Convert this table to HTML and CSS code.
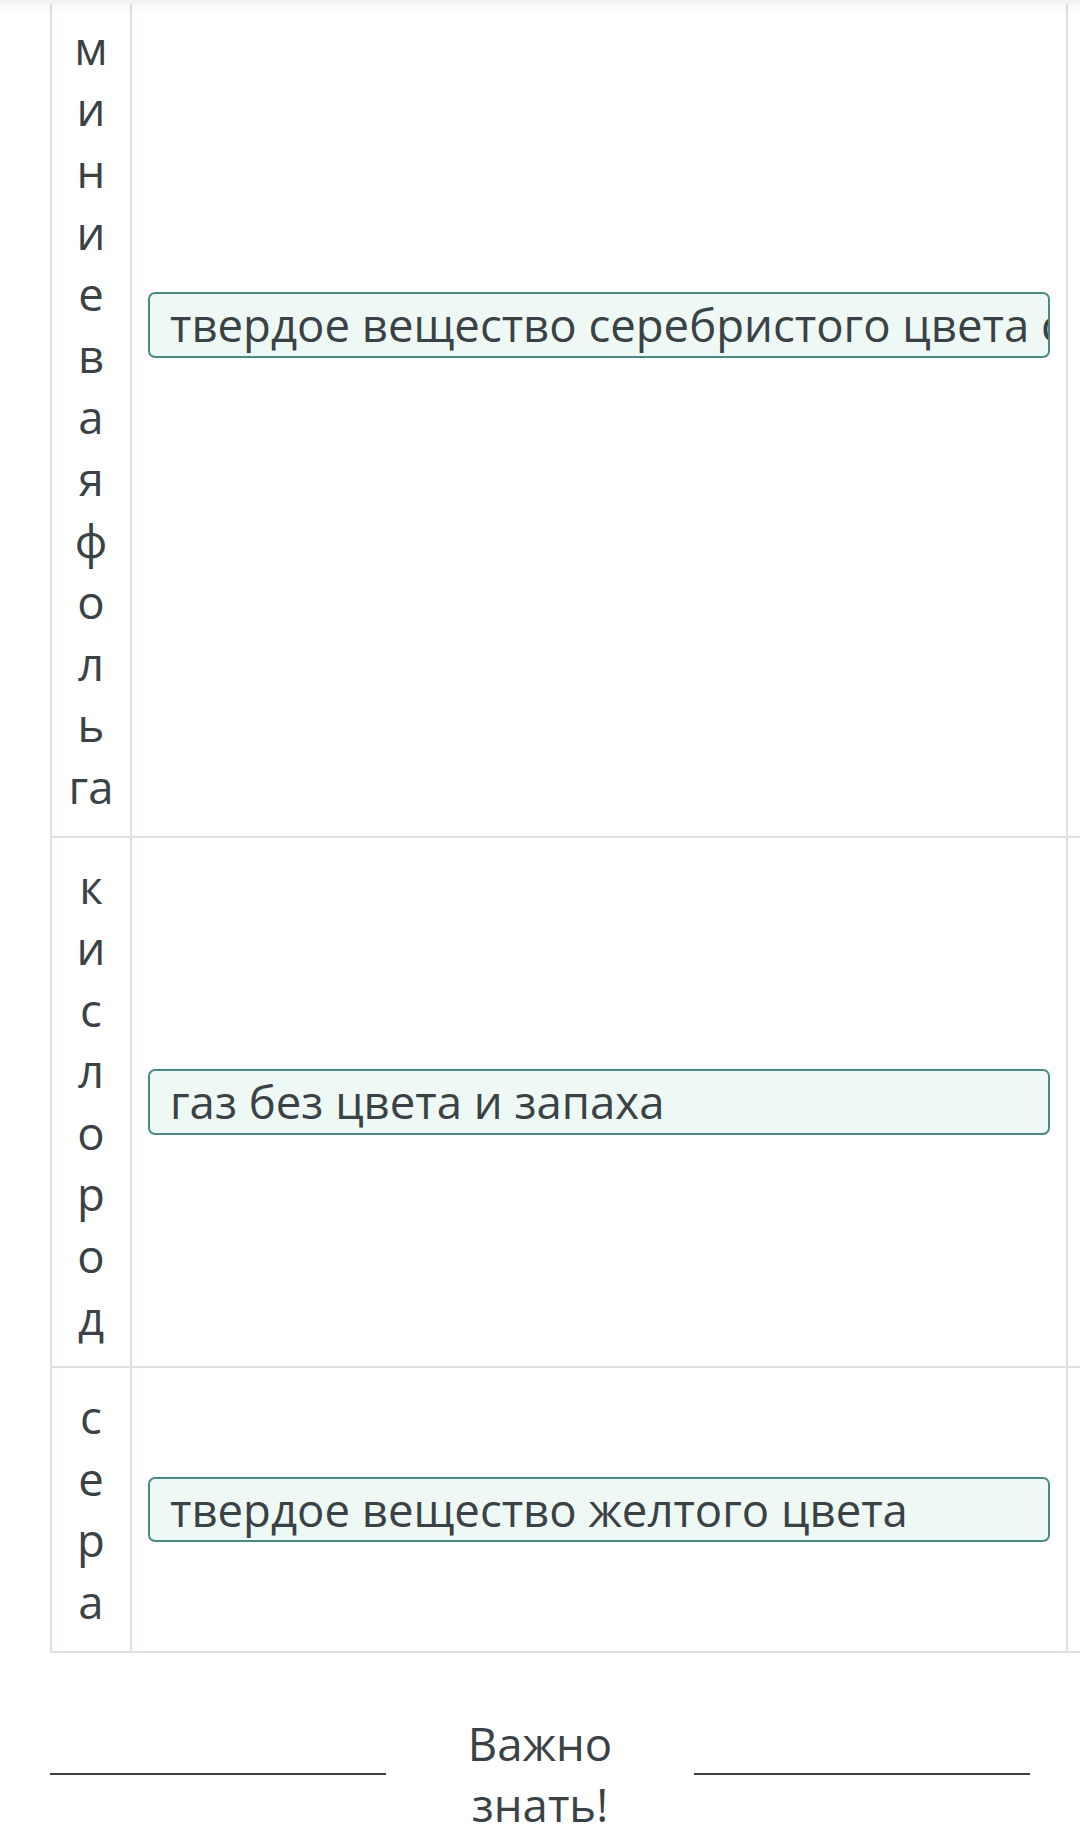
FILE: index.html
```html
<!DOCTYPE html>
<html lang="ru">
<head>
<meta charset="utf-8">
<title>Сопоставление</title>
<link rel="stylesheet" href="styles.css">
</head>
<body>
<header class="topbar"></header>
<main class="page">
  <table class="match">
    <colgroup>
      <col class="col-term">
      <col class="col-def">
      <col class="col-extra">
    </colgroup>
    <tbody>
      <tr>
        <td class="term"><span class="term-text">алюминиевая фоль<span class="keep">га</span></span></td>
        <td class="def"><div class="chip">твердое вещество серебристого цвета с металлическим блеском</div></td>
        <td class="extra"></td>
      </tr>
      <tr>
        <td class="term"><span class="term-text">кислород</span></td>
        <td class="def"><div class="chip">газ без цвета и запаха</div></td>
        <td class="extra"></td>
      </tr>
      <tr>
        <td class="term"><span class="term-text">сера</span></td>
        <td class="def"><div class="chip">твердое вещество желтого цвета</div></td>
        <td class="extra"></td>
      </tr>
    </tbody>
  </table>
  <div class="note">
    <span class="rule"></span>
    <p class="note-text">Важно знать!</p>
    <span class="rule"></span>
  </div>
</main>
</body>
</html>
```
FILE: styles.css
```css
html, body {
  margin: 0;
  padding: 0;
}
body {
  width: 1080px;
  overflow: hidden;
  background: #ffffff;
  color: #3a4245;
  font-family: "Open Sans", "Noto Sans", sans-serif;
  font-size: 45.5px;
  line-height: 61.6px;
}
.topbar {
  position: fixed;
  top: 0;
  left: 0;
  right: 0;
  height: 4px;
  background: #f4f4f4;
  box-shadow: 0 3px 10px rgba(0, 0, 0, 0.07);
  z-index: 2;
}
.page {
  margin-top: -188px;
}
.match {
  border-collapse: collapse;
  table-layout: fixed;
  width: 1216px;
  margin-left: 50px;
}
.col-term { width: 80px; }
.col-def { width: 936px; }
.col-extra { width: 200px; }
.match td {
  border: 2px solid #dce2e3;
  padding: 18px 16px;
  vertical-align: middle;
}
.match td.term {
  padding: 18px 0;
  text-align: center;
}
.term-text {
  display: block;
  width: 46px;
  margin: 0 auto;
  word-break: break-all;
}
.keep {
  white-space: nowrap;
}
.chip {
  border: 2px solid #4b8985;
  background: #eef9f5;
  border-radius: 7px;
  padding: 0 20px;
  white-space: nowrap;
  overflow: hidden;
}
.note {
  display: grid;
  grid-template-columns: 1fr min-content 1fr;
  align-items: center;
  column-gap: 82px;
  margin: 60px 50px 0;
}
.rule {
  height: 2px;
  background: #3a4245;
}
.note-text {
  margin: 0;
  text-align: center;
}
```
